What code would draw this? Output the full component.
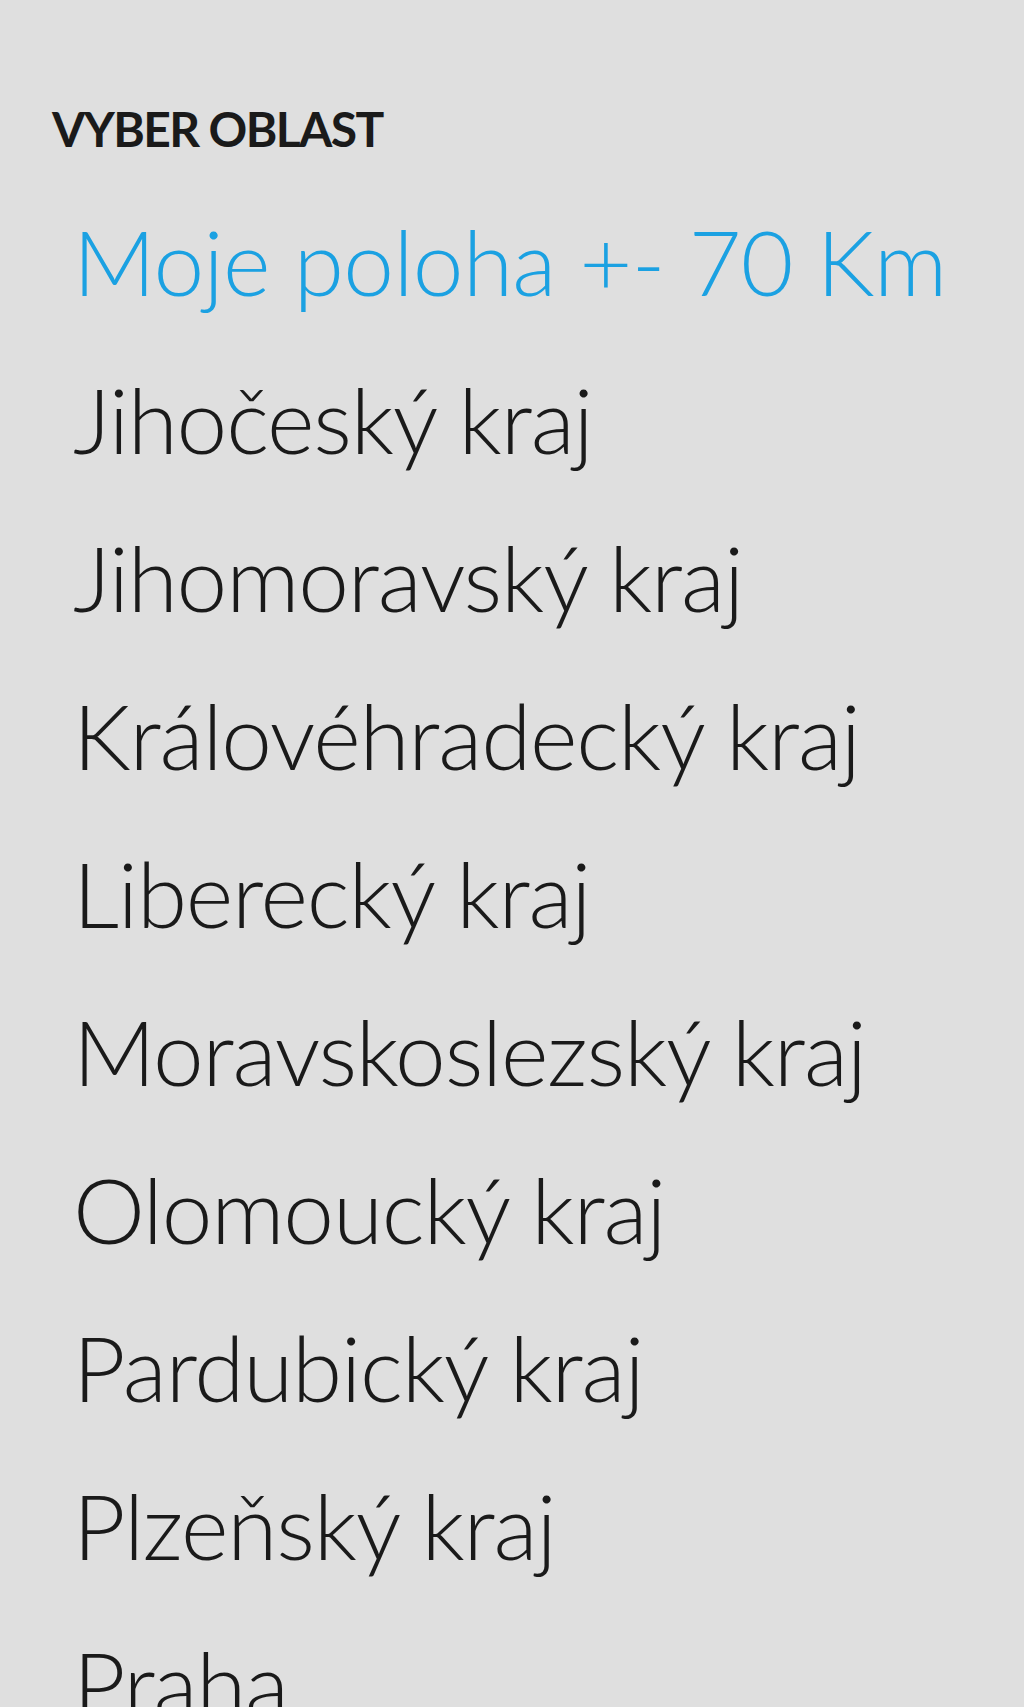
const regions = [
  "Jihočeský kraj",
  "Jihomoravský kraj",
  "Královéhradecký kraj",
  "Liberecký kraj",
  "Moravskoslezský kraj",
  "Olomoucký kraj",
  "Pardubický kraj",
  "Plzeňský kraj",
  "Praha",
];

export default function App() {
  return (
    <div className="h-screen overflow-hidden bg-[#dfdfdf] font-['Lato',sans-serif]">
      <h2 className="pl-[52px] pt-[105px] text-[48px] leading-[48px] tracking-[-1.6px] font-bold text-[#1a1a1a]">
        VYBER OBLAST
      </h2>
      <ul className="mt-[29px] pl-[73px]">
        <li className="h-[158px] text-[91px] leading-[158px] tracking-[-0.7px] font-light text-[#1ba1e2] whitespace-nowrap">
          Moje poloha +- 70 Km
        </li>
        {regions.map((name) => (
          <li
            key={name}
            className="h-[158px] text-[91px] leading-[158px] tracking-[-1.2px] font-light text-[#1a1a1a] whitespace-nowrap"
          >
            {name}
          </li>
        ))}
      </ul>
    </div>
  );
}
